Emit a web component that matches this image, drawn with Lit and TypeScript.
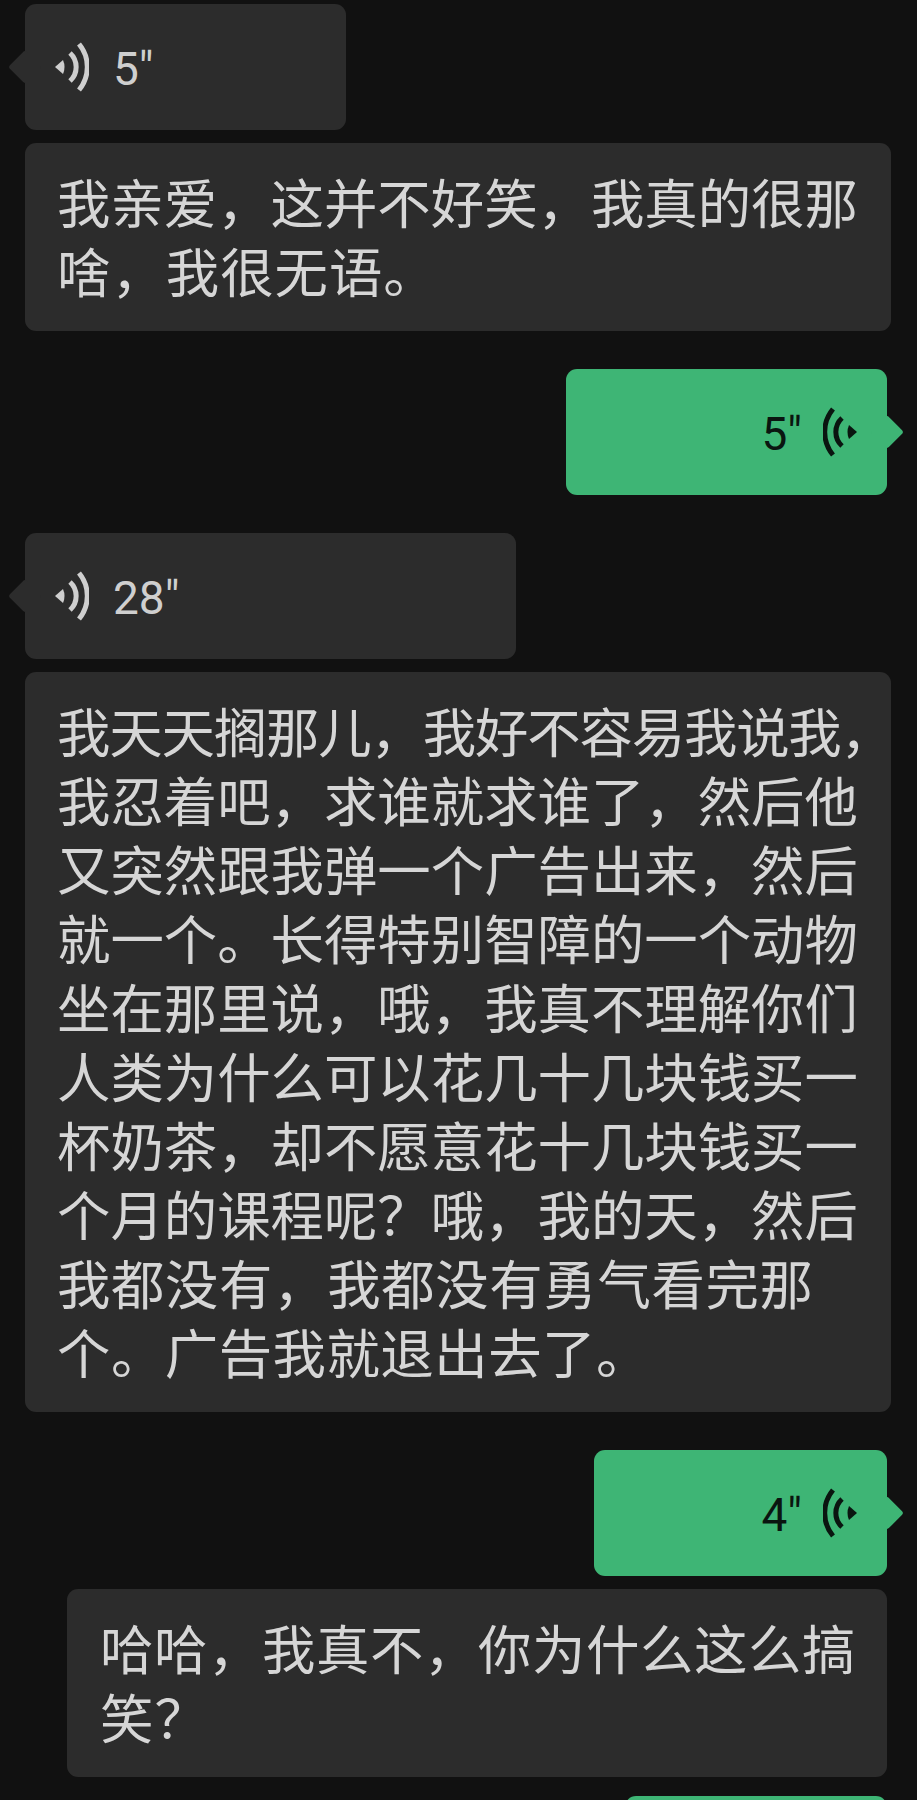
import { LitElement, html, css } from "lit";
import { customElement } from "lit/decorators.js";

type Msg = {
  kind: "text" | "voice";
  side: "in" | "out";
  width: number;
  gap: "none" | "tight" | "mid" | "wide";
  lines?: string[];
  /** per-line letter-spacing in px, in line order; missing means 0 */
  spacing?: number[];
  sec?: string;
};

const C = "\uFF0C";
const Q = "\uFF1F";

const MSGS: Msg[] = [
  { kind: "voice", side: "in", width: 321, gap: "none", sec: '5"' },
  {
    kind: "text",
    side: "in",
    width: 866,
    gap: "tight",
    lines: [`我亲爱${C}这并不好笑${C}我真的很那`, `啥${C}我很无语。`],
    spacing: [0, 1],
  },
  { kind: "voice", side: "out", width: 321, gap: "wide", sec: '5"' },
  { kind: "voice", side: "in", width: 491, gap: "wide", sec: '28"' },
  {
    kind: "text",
    side: "in",
    width: 866,
    gap: "tight",
    lines: [
      `我天天搁那儿${C}我好不容易我说我${C}`,
      `我忍着吧${C}求谁就求谁了${C}然后他`,
      `又突然跟我弹一个广告出来${C}然后`,
      `就一个。长得特别智障的一个动物`,
      `坐在那里说${C}哦${C}我真不理解你们`,
      `人类为什么可以花几十几块钱买一`,
      `杯奶茶${C}却不愿意花十几块钱买一`,
      `个月的课程呢${Q}哦${C}我的天${C}然后`,
      `我都没有${C}我都没有勇气看完那`,
      `个。广告我就退出去了。`,
    ],
    spacing: [-1.15, 0, 0, 0, 0, 0, 0, 0, 0.65, 0.5],
  },
  { kind: "voice", side: "out", width: 293, gap: "wide", sec: '4"' },
  {
    kind: "text",
    side: "out",
    width: 820,
    gap: "tight",
    lines: [`哈哈${C}我真不${C}你为什么这么搞`, `笑${Q}`],
    spacing: [0.6, 1],
  },
  { kind: "voice", side: "out", width: 262, gap: "mid" },
];

@customElement("app-root")
export class AppRoot extends LitElement {
  static styles = css`
    :host {
      display: block;
      height: 1800px;
      overflow: hidden;
      background: #111111;
      font-family: "Noto Sans CJK SC", "Liberation Sans", sans-serif;
    }
    .list {
      display: flex;
      flex-direction: column;
      padding-top: 4px;
    }
    .bubble {
      position: relative;
      box-sizing: border-box;
      border-radius: 11px;
      flex: none;
    }
    .in {
      align-self: flex-start;
      margin-left: 25px;
      background: #2c2c2c;
      color: #d6d6d6;
    }
    .out {
      align-self: flex-end;
      margin-right: 30px;
      background: #3eb575;
      color: #0a1510;
    }
    .text.out {
      background: #2c2c2c;
      color: #d6d6d6;
    }
    .tight { margin-top: 13px; }
    .mid { margin-top: 19px; }
    .wide { margin-top: 38px; }
    .text {
      padding: 23px 32px 27px;
      font-size: 53.4px;
      line-height: 69px;
      white-space: nowrap;
    }
    .text.out {
      padding: 23px 33px 27px;
    }
    .voice {
      height: 126px;
      display: flex;
      align-items: center;
      gap: 24px;
      padding: 0 30px;
      font-family: Roboto, "Liberation Sans", sans-serif;
      font-weight: 400;
      font-size: 46px;
      line-height: 1;
    }
    .voice.in { color: #cfcfcf; }
    .voice.out {
      justify-content: flex-end;
      gap: 21px;
    }
    .voice.in::before,
    .voice.out::after {
      content: "";
      position: absolute;
      top: 50%;
      width: 24px;
      height: 24px;
      background: inherit;
      border-radius: 3px;
      transform: translateY(-50%) rotate(45deg);
    }
    .voice.in::before { left: -12px; }
    .voice.out::after { right: -12px; }
    .icon {
      display: block;
      width: 34px;
      height: 50px;
      flex: none;
    }
    .out .icon { transform: scaleX(-1); }
    .icon path { fill: none; stroke: currentColor; stroke-width: 5; }
    .icon path.dot { fill: currentColor; stroke: none; }
    .sec { padding-top: 3px; }
  `;

  private icon() {
    return html`<svg class="icon" viewBox="0 0 34 50" aria-hidden="true">
      <path class="dot" d="M0 25 L8 18 Q11 25 8 32 Z"></path>
      <path d="M15 11 A19 19 0 0 1 15 39"></path>
      <path d="M24 2 A36 36 0 0 1 24 48"></path>
    </svg>`;
  }

  private renderMsg(m: Msg) {
    const w = `width:${m.width}px`;
    if (m.kind === "text") {
      return html`<div class="bubble text ${m.side} ${m.gap}" style=${w}>
        ${m.lines!.map(
          (l, i) => html`<div style="letter-spacing:${m.spacing?.[i] ?? 0}px">${l}</div>`
        )}
      </div>`;
    }
    if (!m.sec) {
      return html`<div class="bubble voice ${m.side} ${m.gap}" style=${w}></div>`;
    }
    return html`<div class="bubble voice ${m.side} ${m.gap}" style=${w}>
      ${m.side === "in"
        ? html`${this.icon()}<span class="sec">${m.sec}</span>`
        : html`<span class="sec">${m.sec}</span>${this.icon()}`}
    </div>`;
  }

  render() {
    return html`<div class="list">${MSGS.map((m) => this.renderMsg(m))}</div>`;
  }
}
